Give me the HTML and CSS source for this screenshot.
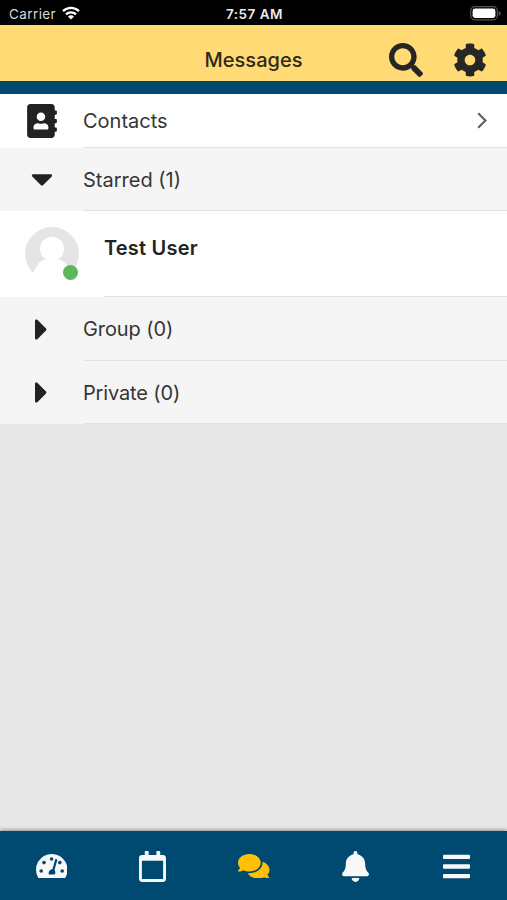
FILE: index.html
```html
<!DOCTYPE html>
<html lang="en">
<head>
<meta charset="utf-8">
<title>Messages</title>
<link rel="stylesheet" href="styles.css">
</head>
<body>
<div class="app">
  <div class="status">
    <div class="carrier"><span>Carrier</span>
      <svg class="wifi" viewBox="0 0 18 14"><g fill="none" stroke="#fff" stroke-width="2.3"><path d="M1 5.2a11.5 11.5 0 0 1 16 0"/><path d="M4 8.4a7.2 7.2 0 0 1 10 0"/></g><path fill="#fff" d="M9 13.6L5.9 10.5a4.4 4.4 0 0 1 6.2 0z"/></svg>
    </div>
    <span class="time">7:57 AM</span>
    <svg class="battery" viewBox="0 0 31 15"><rect x=".7" y=".7" width="26.6" height="13.2" rx="4.2" fill="none" stroke="#555" stroke-width="1.2"/><rect x="2.6" y="2.6" width="22.8" height="9.4" rx="2.4" fill="#fff"/><path fill="#555" d="M28.6 5q2.2.6 2.2 2.4t-2.2 2.4z"/></svg>
  </div>
  <header class="header">
    <h1>Messages</h1>
    <div class="actions">
      <svg viewBox="0 0 512 512"><path d="M505 442.7L405.3 343c-4.5-4.5-10.6-7-17-7H372c27.6-35.3 44-79.7 44-128C416 93.1 322.9 0 208 0S0 93.1 0 208s93.1 208 208 208c48.3 0 92.7-16.4 128-44v16.3c0 6.4 2.5 12.5 7 17l99.7 99.7c9.4 9.4 24.6 9.4 33.9 0l28.3-28.3c9.4-9.4 9.4-24.6.1-34zM208 336c-70.7 0-128-57.2-128-128 0-70.7 57.2-128 128-128 70.7 0 128 57.2 128 128 0 70.7-57.2 128-128 128z"/></svg>
      <svg viewBox="0 0 512 512"><path d="M487.4 315.7l-42.6-24.6c4.3-23.2 4.3-47 0-70.2l42.6-24.6c4.9-2.8 7.1-8.6 5.5-14-11.1-35.6-30-67.8-54.7-94.6-3.8-4.1-10-5.1-14.8-2.3L380.8 110c-17.9-15.4-38.5-27.3-60.8-35.1V25.8c0-5.6-3.9-10.5-9.4-11.7-36.7-8.2-74.3-7.8-109.2 0-5.5 1.2-9.4 6.1-9.4 11.7V75c-22.2 7.9-42.8 19.8-60.8 35.1L88.7 85.5c-4.9-2.8-11-1.9-14.8 2.3-24.7 26.7-43.6 58.9-54.7 94.6-1.7 5.4.6 11.2 5.5 14L67.3 221c-4.3 23.2-4.3 47 0 70.2l-42.6 24.6c-4.9 2.8-7.1 8.6-5.5 14 11.1 35.6 30 67.8 54.7 94.6 3.8 4.1 10 5.1 14.8 2.3l42.6-24.6c17.9 15.4 38.5 27.3 60.8 35.1v49.2c0 5.6 3.9 10.5 9.4 11.7 36.7 8.2 74.3 7.8 109.2 0 5.5-1.2 9.4-6.1 9.4-11.7v-49.2c22.2-7.9 42.8-19.8 60.8-35.1l42.6 24.6c4.9 2.8 11 1.9 14.8-2.3 24.7-26.7 43.6-58.9 54.7-94.6 1.5-5.5-.7-11.3-5.6-14.1zM256 336c-44.1 0-80-35.9-80-80s35.9-80 80-80 80 35.9 80 80-35.9 80-80 80z"/></svg>
    </div>
  </header>
  <main class="content">
    <div class="row contacts">
      <div class="lead"><svg class="book" viewBox="0 0 448 512"><path d="M436 160c6.6 0 12-5.4 12-12v-40c0-6.6-5.4-12-12-12h-20V48c0-26.5-21.5-48-48-48H48C21.5 0 0 21.5 0 48v416c0 26.5 21.5 48 48 48h320c26.5 0 48-21.5 48-48v-48h20c6.6 0 12-5.4 12-12v-40c0-6.6-5.4-12-12-12h-20v-64h20c6.6 0 12-5.4 12-12v-40c0-6.6-5.4-12-12-12h-20v-64h20zm-228-32c35.3 0 64 28.7 64 64s-28.7 64-64 64-64-28.7-64-64 28.7-64 64-64zm112 236.8c0 10.6-10 19.2-22.4 19.2H118.4C106 384 96 375.4 96 364.8v-19.2c0-31.8 30.1-57.6 67.2-57.6h5c12.3 5.1 25.7 8 39.8 8s27.6-2.9 39.8-8h5c37.1 0 67.2 25.8 67.2 57.6v19.2z"/></svg></div>
      <div class="label"><span>Contacts</span><svg class="chevron" viewBox="0 0 10 17"><path d="M1.2 1.3L8.4 8.5l-7.2 7.2"/></svg></div>
    </div>
    <div class="row group starred">
      <div class="lead"><svg class="down" viewBox="0 0 320 512"><path d="M31.3 192h257.3c17.8 0 26.7 21.5 14.1 34.1L174.1 354.8c-7.8 7.8-20.5 7.8-28.3 0L17.2 226.1C4.6 213.5 13.5 192 31.3 192z"/></svg></div>
      <div class="label"><span>Starred (1)</span></div>
    </div>
    <div class="row user">
      <div class="avatar">
        <svg viewBox="0 0 54 54"><circle cx="27" cy="27" r="27" fill="#e5e5e5"/><path fill="#fff" d="M8.2 46C11.5 38 15 33.5 20.5 32.6h13C39 33.5 43 38 46 46v8H8.2z"/><circle cx="27" cy="21.8" r="12" fill="#fff"/></svg>
        <span class="online"></span>
      </div>
      <div class="label"><span>Test User</span></div>
    </div>
    <div class="row group collapsed">
      <div class="lead"><svg class="right" viewBox="0 0 192 512"><path d="M0 384.7V127.3c0-17.8 21.5-26.7 34.1-14.1l128.7 128.7c7.8 7.8 7.8 20.4 0 28.2L34.1 398.8C21.5 411.4 0 402.5 0 384.7z"/></svg></div>
      <div class="label"><span>Group (0)</span></div>
    </div>
    <div class="row group">
      <div class="lead"><svg class="right" viewBox="0 0 192 512"><path d="M0 384.7V127.3c0-17.8 21.5-26.7 34.1-14.1l128.7 128.7c7.8 7.8 7.8 20.4 0 28.2L34.1 398.8C21.5 411.4 0 402.5 0 384.7z"/></svg></div>
      <div class="label private"><span>Private (0)</span></div>
    </div>
  </main>
  <nav class="tabs">
    <div class="tab"><svg class="wide" viewBox="0 0 31.5 24.5"><path fill="#f7f8fa" d="M15.75 0A15.75 15.75 0 0 0 2.1 23.6q.6.9 1.6.9h24.1q1 0 1.6-.9A15.75 15.75 0 0 0 15.75 0z"/><g fill="#00476f"><circle cx="15.6" cy="5" r="1.8"/><circle cx="8" cy="8.600" r="1.8"/><circle cx="23.8" cy="8.600" r="1.8"/><circle cx="5.200" cy="17" r="1.8"/><circle cx="26.200" cy="17" r="1.8"/><path d="M19.300 5q1.700-.5 2 1.100l-2.700 9.700q1.500 2.500.4 4.700h-6.300q-.6-4.700 3.800-5.600z"/></g></svg></div>
    <div class="tab"><svg class="tall" viewBox="0 0 448 512"><path d="M400 64h-48V12c0-6.600-5.400-12-12-12h-40c-6.600 0-12 5.400-12 12v52H160V12c0-6.600-5.400-12-12-12h-40c-6.600 0-12 5.400-12 12v52H48C21.500 64 0 85.500 0 112v352c0 26.500 21.500 48 48 48h352c26.500 0 48-21.500 48-48V112c0-26.500-21.500-48-48-48zm-6 400H54c-3.300 0-6-2.700-6-6V160h352v298c0 3.300-2.700 6-6 6z"/></svg></div>
    <div class="tab active"><svg class="wide" viewBox="0 32 576 448"><path d="M416 192c0-88.400-93.100-160-208-160S0 103.600 0 192c0 34.300 14.100 65.900 38 92-13.400 30.200-35.500 54.200-35.800 54.500-2.200 2.300-2.800 5.700-1.500 8.700S4.800 352 8 352c36.600 0 66.900-12.300 88.700-25 32.200 15.700 70.300 25 111.300 25 114.900 0 208-71.600 208-160zm122 220c23.900-26 38-57.700 38-92 0-66.900-53.500-124.200-129.300-148.100.9 6.600 1.300 13.300 1.300 20.100 0 105.900-107.700 192-240 192-10.800 0-21.300-.8-31.700-1.900C207.800 439.600 281.800 480 368 480c41 0 79.100-9.200 111.300-25 21.800 12.700 52.100 25 88.700 25 3.200 0 6.100-1.900 7.300-4.800 1.300-2.900.7-6.300-1.500-8.700-.3-.3-22.400-24.200-35.800-54.500z"/></svg></div>
    <div class="tab"><svg class="tall" viewBox="0 0 448 512"><path d="M224 512c35.320 0 63.970-28.650 63.970-64H160.030c0 35.350 28.650 64 63.970 64zm215.390-149.710c-19.320-20.760-55.470-51.990-55.470-154.290 0-77.700-54.480-139.900-127.940-155.160V32c0-17.670-14.320-32-31.980-32s-31.980 14.330-31.980 32v20.840C118.560 68.100 64.080 130.300 64.080 208c0 102.300-36.150 133.530-55.470 154.290-6 6.450-8.660 14.160-8.610 21.710.11 16.400 12.980 32 32.100 32h383.800c19.120 0 32-15.600 32.100-32 .05-7.550-2.610-15.270-8.610-21.710z"/></svg></div>
    <div class="tab"><svg class="tall" viewBox="0 0 448 512"><rect y="60" width="448" height="72" rx="16"/><rect y="220" width="448" height="72" rx="16"/><rect y="380" width="448" height="72" rx="16"/></svg></div>
  </nav>
</div>
</body>
</html>
```
FILE: styles.css
```css
* { box-sizing: border-box; }
body { margin: 0; font-family: Inter, "Liberation Sans", sans-serif; color: #353535; background: #e8e8e8; }
svg { display: block; flex: none; }
.app { height: 900px; display: flex; flex-direction: column; overflow: hidden; }
.status { height: 25px; background: #000; color: #fff; display: grid; grid-template-columns: 1fr auto 1fr; align-items: center; padding: 3px 7px 0 9px; font-size: 13.5px; line-height: 18px; }
.carrier { display: flex; gap: 6px; align-items: center; color: #d6d6d6; letter-spacing: .4px; }
.wifi { width: 18px; height: 14px; margin-top: -3px; }
.time { font-weight: 600; font-size: 13.5px; letter-spacing: .5px; color: #ececec; }
.battery { width: 31px; height: 15px; justify-self: end; margin: -2px -1px 0 0; }
.header { height: 69px; background: #ffda75; border-bottom: 13px solid #004a72; display: grid; grid-template-columns: 1fr auto 1fr; align-items: center; padding: 13px 20px 0; }
.header h1 { grid-column: 2; margin: 1px 0 0; font-size: 20px; line-height: 24px; font-weight: 500; color: #30291b; }
.actions { display: flex; justify-content: flex-end; gap: 30px; fill: #262626; }
.actions svg { width: 34px; height: 34px; }
.content { flex: 1; }
.row { display: flex; background: #fff; height: 63px; }
.contacts { height: 54px; }
.user { height: 86px; }
.group { background: #f5f5f5; }
.group.collapsed { height: 64px; }
.lead { width: 83px; display: flex; align-items: center; padding-left: 27px; fill: #222; }
.book { width: 30px; height: 34px; margin-top: -1px; }
.down { width: 22px; height: 35px; margin: -2px 0 0 4px; }
.right { width: 13px; height: 35px; margin-left: 8px; }
.label { flex: 1; display: flex; align-items: center; justify-content: space-between; border-bottom: 1px solid #e2e2e2; font-size: 20px; line-height: 26px; padding-right: 20px; }
.starred .label, .collapsed .label { padding-top: 1px; }
.collapsed .label { letter-spacing: -.1px; }
.private { letter-spacing: -.15px; padding-top: 1px; }
.chevron { width: 10px; height: 17px; fill: none; stroke: #606060; stroke-width: 2.2; }
.avatar { width: 54px; height: 54px; margin: 16px 25px 0; position: relative; }
.online { position: absolute; right: 1px; bottom: 1px; width: 15px; height: 15px; border-radius: 50%; background: #5cb85c; }
.user .label { align-items: flex-start; padding-top: 24px; font-weight: 600; letter-spacing: .2px; color: #222; }
.tabs { height: 69px; background: #004a72; display: grid; grid-template-columns: repeat(5, 1fr); box-shadow: 0 -1px 4px rgba(0,0,0,.4); fill: #f8f8f8; padding-left: 1px; }
.tab { display: flex; justify-content: center; align-items: center; padding-top: 1px; }
.active { fill: #ffc107; }
.wide { width: 31.5px; height: 24.5px; }
.tall { width: 27px; height: 31px; }
```
